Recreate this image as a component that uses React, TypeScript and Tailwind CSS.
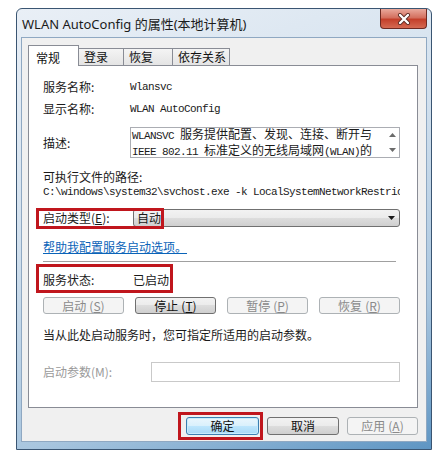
import React from 'react';

const cjk = "font-['Noto_Sans_CJK_SC','Noto_Sans',sans-serif]";
const mono = "font-['Liberation_Mono','Noto_Sans_CJK_SC',monospace] text-[11px] tracking-[-0.6px]";

type BtnKind = 'normal' | 'disabled' | 'default';

const Btn = ({ label, hot, kind, w }: { label: string; hot?: string; kind: BtnKind; w: string }) => {
  const look =
    kind === 'disabled'
      ? 'border-[#adb2b5] bg-[#f4f4f4] text-[#8a8a8a]'
      : kind === 'default'
      ? 'border-[#3c7fb1] bg-[linear-gradient(#eaf6fd,#d9f0fc_50%,#bee6fd_50%,#a7d9f5)] text-[#111] shadow-[inset_0_0_0_1px_#c8ecfc]'
      : 'border-[#707070] bg-[linear-gradient(#f2f2f2,#ebebeb_50%,#dddddd_50%,#cfcfcf)] text-[#111]';
  return (
    <div className={`${w} flex h-full items-center justify-center rounded-[3px] border text-[12px] leading-none ${look}`}>
      {label}
      {hot && (
        <span className="ml-[3px]">
          (<span className="underline">{hot}</span>)
        </span>
      )}
    </div>
  );
};

const RedBox = ({ cls }: { cls: string }) => (
  <div className={`pointer-events-none absolute border-[3px] border-[#c0161d] ${cls}`} />
);

const tabs = [
  { t: '登录', w: 'w-[45px]' },
  { t: '恢复', w: 'w-[49px]' },
  { t: '依存关系', w: 'w-[57px]' },
];

export default function App() {
  return (
    <div className={`h-[455px] w-[442px] bg-white pt-[8px] pl-[16px] ${cjk}`}>
      <div className="flex h-[442px] w-[416px] flex-col rounded-t-[6px] border border-[#3a5572] bg-[linear-gradient(160deg,#e9eff6_0%,#d3e1ee_40%,#a9c6df_75%,#5e95c3_100%)]">
        {/* title bar */}
        <div className="flex h-[28px] items-start justify-between">
          <div className="pt-[6px] pl-[5px] text-[13px] leading-[18px] text-[#1b1b1b] font-['Noto_Sans','Noto_Sans_CJK_SC',sans-serif]">
            WLAN AutoConfig 的属性(本地计算机)
          </div>
          <div className="mr-[4px] flex h-[20px] w-[47px] items-center justify-center rounded-b-[4px] border border-t-0 border-[#6e2a22] bg-[linear-gradient(#e9a99c,#d4705f_45%,#c4402b_55%,#d56a52)]">
            <svg width="14" height="12" viewBox="0 0 14 12">
              <path d="M3 2 L11 10 M11 2 L3 10" stroke="#5a2a22" strokeWidth="4" strokeLinecap="round" />
              <path d="M3 2 L11 10 M11 2 L3 10" stroke="#ffffff" strokeWidth="2.4" strokeLinecap="round" />
            </svg>
          </div>
        </div>

        {/* client area */}
        <div className="mx-[4px] flex h-[405px] flex-col border border-[#8fa8c2] bg-[#f0f0f0] pt-[7px] pl-[6px]">
          {/* tabs */}
          <div className="flex h-[20px] items-end text-[12px] text-[#111]">
            <div className="relative z-10 -mb-px flex h-[21px] w-[51px] items-start border border-b-0 border-[#898c95] bg-white pt-[3px] pl-[7px]">
              常规
            </div>
            {tabs.map((tb) => (
              <div
                key={tb.t}
                className={`${tb.w} flex h-[17px] items-center border border-b-0 border-l-0 border-[#898c95] bg-[linear-gradient(#f4f4f4,#e4e4e4)] pl-[5px]`}
              >
                {tb.t}
              </div>
            ))}
          </div>

          {/* tab panel */}
          <div className="flex h-[343px] w-[390px] flex-col border border-[#898c95] bg-white pl-[14px] pr-[17px] text-[12px] text-[#1a1a1a]">
            <div className="mt-[13px] flex h-[16px] items-center">
              <div className="w-[87px]">服务名称:</div>
              <div className={mono}>Wlansvc</div>
            </div>
            <div className="mt-[6px] flex h-[16px] items-center">
              <div className="w-[87px]">显示名称:</div>
              <div className={mono}>WLAN AutoConfig</div>
            </div>
            <div className="mt-[10px] flex h-[31px] items-center">
              <div className="w-[87px]">描述:</div>
              <div className="flex h-full flex-1 border border-[#abadb3] bg-white">
                <div className="flex flex-1 flex-col justify-center pl-[1px] leading-[13px]">
                  <div className="whitespace-nowrap">
                    <span className={mono}>WLANSVC </span>服务提供配置、发现、连接、断开与
                  </div>
                  <div className="whitespace-nowrap">
                    <span className={mono}>IEEE 802.11 </span>标准定义的无线局域网<span className={mono}>(WLAN)</span>的
                  </div>
                </div>
                <div className="flex w-[14px] flex-col items-center justify-between py-[5px]">
                  <svg width="7" height="4" viewBox="0 0 7 4">
                    <path d="M0 4 L3.5 0 L7 4 Z" fill="#6b6b6b" />
                  </svg>
                  <svg width="7" height="4" viewBox="0 0 7 4">
                    <path d="M0 0 L3.5 4 L7 0 Z" fill="#6b6b6b" />
                  </svg>
                </div>
              </div>
            </div>
            <div className="mt-[11px] flex h-[16px] items-center">可执行文件的路径:</div>
            <div className={`flex h-[14px] items-center overflow-hidden whitespace-nowrap ${mono}`}>
              C:\windows\system32\svchost.exe -k LocalSystemNetworkRestric
            </div>

            <div className="relative mt-[10px] flex h-[18px] items-center">
              <div className="w-[90px]">启动类型(<span className="underline">E</span>):</div>
              <div className="flex h-full flex-1 items-center justify-between rounded-[3px] border border-[#707070] bg-[linear-gradient(#f2f2f2,#ebebeb_50%,#dddddd_50%,#cfcfcf)] pr-[4px] pl-[3px]">
                <span>自动</span>
                <svg width="7" height="4" viewBox="0 0 7 4">
                  <path d="M0 0 L3.5 4 L7 0 Z" fill="#1a1a1a" />
                </svg>
              </div>
              <RedBox cls="-left-[7px] -top-[1px] h-[21px] w-[128px]" />
            </div>

            <div className="mt-[12px] flex h-[16px] items-center">
              <span className="text-[#0a63b8] underline">帮助我配置服务启动选项。</span>
            </div>

            <div className="mt-[6px] mr-[4px] h-[2px] border-t border-b border-t-[#a0a0a0] border-b-white" />

            <div className="relative mt-[9px] flex h-[16px] items-center">
              <div className="w-[90px]">服务状态:</div>
              <div>已启动</div>
              <RedBox cls="-left-[7px] -top-[8px] h-[29px] w-[137px]" />
            </div>

            <div className="mt-[9px] flex h-[17px] justify-between">
              <Btn label="启动" hot="S" kind="disabled" w="w-[81px]" />
              <Btn label="停止" hot="T" kind="normal" w="w-[81px]" />
              <Btn label="暂停" hot="P" kind="disabled" w="w-[81px]" />
              <Btn label="恢复" hot="R" kind="disabled" w="w-[81px]" />
            </div>

            <div className="mt-[13px] flex h-[16px] items-center whitespace-nowrap">
              当从此处启动服务时，您可指定所适用的启动参数。
            </div>

            <div className="mt-[19px] flex h-[20px] items-center">
              <div className="w-[108px] text-[#9a9a9a]">启动参数(M):</div>
              <div className="h-full flex-1 border border-[#c9c9c9] bg-white" />
            </div>
          </div>

          {/* bottom buttons */}
          <div className="mt-[9px] flex h-[18px] w-[390px] justify-end gap-[8px]">
            <div className="relative flex h-full">
              <Btn label="确定" kind="default" w="w-[73px]" />
              <RedBox cls="-left-[8px] -top-[5px] h-[28px] w-[85px]" />
            </div>
            <Btn label="取消" kind="normal" w="w-[72px]" />
            <Btn label="应用" hot="A" kind="disabled" w="w-[71px]" />
          </div>
        </div>
      </div>
    </div>
  );
}
